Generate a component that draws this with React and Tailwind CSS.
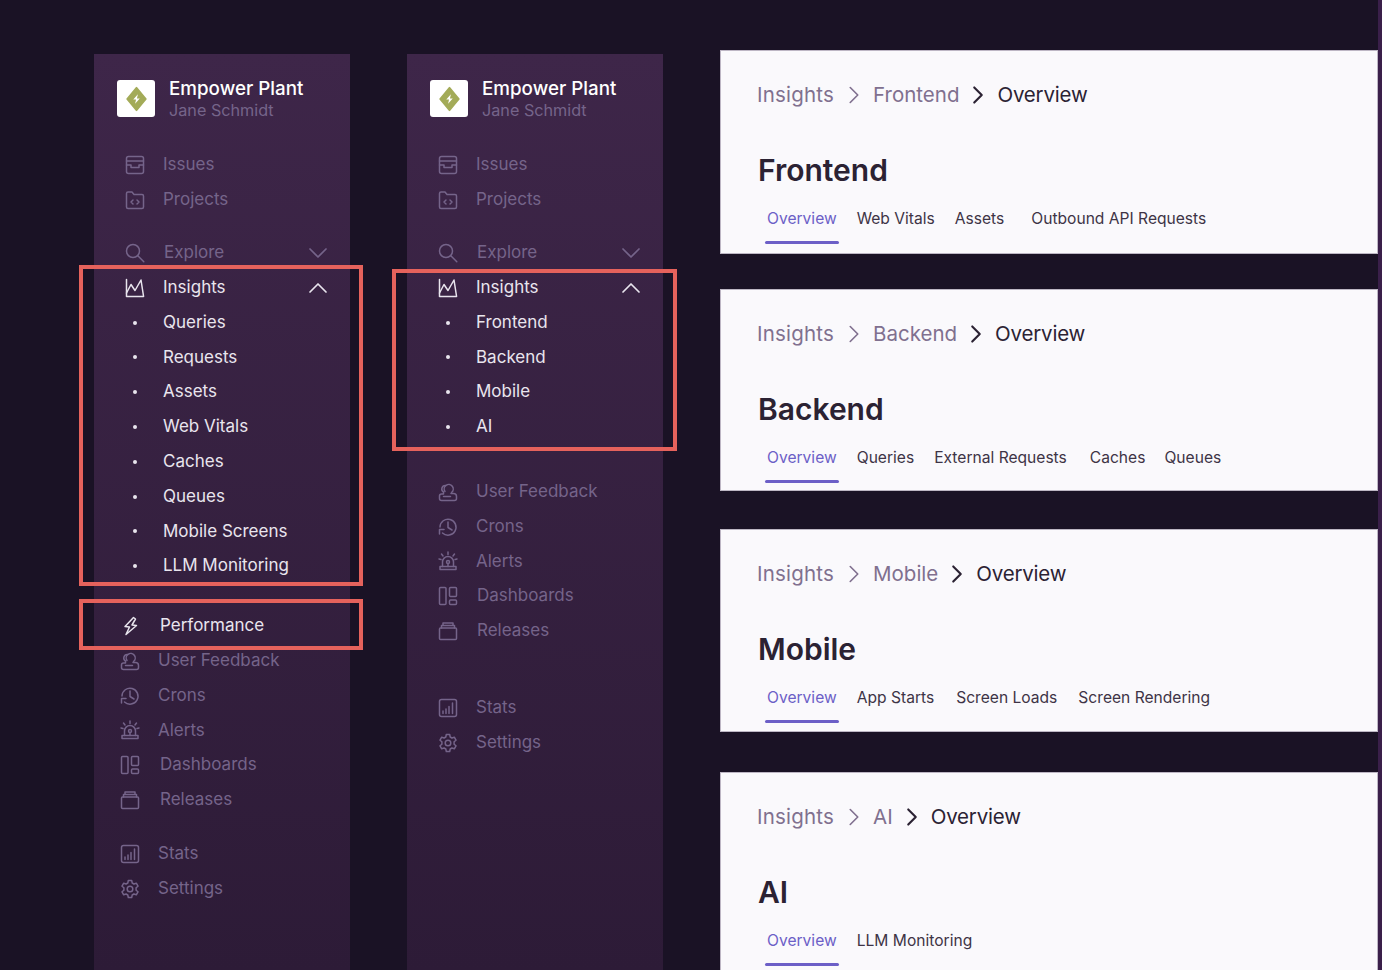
import { ChevronDown, ChevronRight, ChevronUp } from "lucide-react";

const Svg = ({ children, className = "" }) => (
  <svg viewBox="0 0 20 20" fill="none" stroke="currentColor" strokeWidth="1.5" strokeLinecap="round" strokeLinejoin="round" className={`w-5 h-5 shrink-0 ${className}`}>
    {children}
  </svg>
);

const IssuesIcon = () => (
  <Svg>
    <rect x="1.5" y="1.5" width="17" height="17" rx="2" />
    <path d="M1.5 6h17M1.5 10h4.5v2.5h8V10h4.5" />
  </Svg>
);
const ProjectsIcon = () => (
  <Svg>
    <path d="M1.5 3.5a1.500 1.500 0 0 1 1.500-1.500h4l2 2.500h8a1.500 1.500 0 0 1 1.500 1.500v11a1.500 1.500 0 0 1-1.500 1.500H3A1.500 1.500 0 0 1 1.500 17z" />
    <path d="M8 10l-2 2 2 2M12 10l2 2-2 2" />
  </Svg>
);
const SearchIcon = () => (
  <Svg>
    <circle cx="8" cy="8" r="6.500" />
    <path d="M12.800 12.800l6 6" />
  </Svg>
);
const InsightsIcon = () => (
  <Svg>
    <path d="M1.500 1.500v17h17" />
    <path d="M1.500 15l4.500-8.500 4 6 6-10.500 2.500 16" />
  </Svg>
);
const BoltIcon = () => (
  <Svg>
    <path d="M12.500 1.500L4 10.500l4.500.5-3.500 7.500L15.500 9.500 11 9l3.500-6z" />
  </Svg>
);
const FeedbackIcon = () => (
  <Svg>
    <path d="M7 9.500a4.500 4.500 0 1 1 6.500 1" />
    <path d="M7.500 3.500a3.500 3.500 0 0 0-2 6.500v2H3.500a2 2 0 0 0-2 2v2.500a2 2 0 0 0 2 2h13a2 2 0 0 0 2-2v-2a3 3 0 0 0-3-3h-2.500" />
    <path d="M5.500 14.500h7" />
  </Svg>
);
const CronsIcon = () => (
  <Svg>
    <path d="M2 10a8 8 0 1 1 2.500 6" />
    <path d="M10 5v5.500l4 2.500M1.500 12.500h4.500M1.500 12.500v4.500" />
  </Svg>
);
const AlertsIcon = () => (
  <Svg>
    <path d="M4.500 15.500V11a5.500 5.500 0 0 1 11 0v4.500" />
    <path d="M2 15.500h16v3H2z" />
    <circle cx="10" cy="11" r="1.500" />
    <path d="M10 12.500v3M10 1v2.500M3.500 3l1.500 2M16.500 3L15 5M1 8l2 .5M19 8l-2 .5" />
  </Svg>
);
const DashboardsIcon = () => (
  <Svg>
    <rect x="1.500" y="1.500" width="6.500" height="17" rx="1" />
    <rect x="11.500" y="1.500" width="7" height="9" rx="1" />
    <rect x="11.500" y="14" width="7" height="4.500" rx="1" />
  </Svg>
);
const ReleasesIcon = () => (
  <Svg>
    <rect x="1.500" y="7" width="17" height="11.500" rx="1" />
    <path d="M3.500 7V4.500h13V7M5 4.500V2h10v2.500" />
  </Svg>
);
const StatsIcon = () => (
  <Svg>
    <rect x="1.500" y="1.500" width="17" height="17" rx="2" />
    <path d="M5 15.500v-2.500M8 15.500v-4.500M11 15.500V8.500M14.500 15.500V5" />
  </Svg>
);
const SettingsIcon = () => (
  <Svg>
    <circle cx="10" cy="10" r="2.800" />
    <path d="M8.300 1.500h3.400l.5 2.500 1.700 1 2.400-.8 1.700 3-1.900 1.600v2.400l1.900 1.600-1.700 3-2.400-.8-1.700 1-.5 2.500H8.300l-.5-2.500-1.700-1-2.400.8-1.700-3L3.900 11.200V8.800L2 7.200l1.700-3 2.400.8 1.700-1z" />
  </Svg>
);

function Row({ icon, label, active, sub, chevron, pad = "pl-[31px]", gap = "ml-[18px]", className = "" }) {
  return (
    <div className={`flex h-[34.8px] items-center pr-[16px] text-[17px] ${pad} ${active ? "text-[#e9e5ee]" : "text-[#75648a]"} ${className}`}>
      <span className="flex w-5 justify-center">
        {sub ? <span className="h-1 w-1 rounded-full bg-[#e9e5ee]" /> : icon}
      </span>
      <span className={gap}>{label}</span>
      {chevron === "down" && <ChevronDown className="ml-auto h-[32px] w-[32px]" strokeWidth={1.3} />}
      {chevron === "up" && <ChevronUp className="ml-auto h-[32px] w-[32px]" strokeWidth={1.3} />}
    </div>
  );
}

function Sidebar({ insights, extraMargin, statsMargin, performance }) {
  const pad = performance ? "pl-[26px]" : "pl-[31px]";
  const wideGap = performance ? "ml-[20px]" : "ml-[19px]";
  return (
    <aside className="w-[256px] h-[916px] mt-[54px] bg-gradient-to-b from-[#3e2649] to-[#2d1b37]">
      <div className="flex h-[93.600px] items-start pl-[23px] pt-[26px]">
        <div className="flex h-[37px] w-[38px] items-center justify-center rounded-[3px] bg-white">
          <svg viewBox="0 0 24 28" className="h-[26px] w-[23px]">
            <path d="M12 2l10 12-10 12L2 14z" fill="#a3ab58" stroke="#a3ab58" strokeWidth="2" strokeLinejoin="round" />
            <path d="M13.500 9l-5 5.500h3L10.500 19l5-5.500h-3z" fill="white" />
          </svg>
        </div>
        <div className="ml-[14px] -mt-[3px]">
          <div className="text-[18.800px] font-medium leading-[24px] text-white">Empower Plant</div>
          <div className="text-[16.200px] leading-[19px] text-[#75648a]">Jane Schmidt</div>
        </div>
      </div>

      <Row icon={<IssuesIcon />} label="Issues" />
      <Row icon={<ProjectsIcon />} label="Projects" />

      <Row icon={<SearchIcon />} label="Explore" chevron="down" className="mt-[18.400px]" gap="ml-[19px]" />
      <Row icon={<InsightsIcon />} label="Insights" chevron="up" active />
      {insights.map((name) => (
        <Row key={name} sub active label={name} />
      ))}

      {performance && <Row icon={<BoltIcon />} label="Performance" active className="mt-[25px]" pad="pl-[27px]" gap="ml-[19px]" />}

      <div className={extraMargin}>
        <Row icon={<FeedbackIcon />} label="User Feedback" pad={pad} />
        <Row icon={<CronsIcon />} label="Crons" pad={pad} />
        <Row icon={<AlertsIcon />} label="Alerts" pad={pad} />
        <Row icon={<DashboardsIcon />} label="Dashboards" pad={pad} gap={wideGap} />
        <Row icon={<ReleasesIcon />} label="Releases" pad={pad} gap={wideGap} />
      </div>

      <div className={statsMargin}>
        <Row icon={<StatsIcon />} label="Stats" pad={pad} />
        <Row icon={<SettingsIcon />} label="Settings" pad={pad} />
      </div>
    </aside>
  );
}

function Panel({ name, tabs, className = "" }) {
  return (
    <section className={`shrink-0 border border-[#bdb6c4] bg-[#faf9fc] pl-[36px] ${className}`}>
      <div className="flex h-[90px] items-center pb-[1px] text-[20.500px] text-[#80708f]">
        <span className="tracking-[0.2px]">Insights</span>
        <ChevronRight className="ml-[5px] mr-[4px] h-[30px] w-[30px]" strokeWidth={1.3} />
        <span>{name}</span>
        <ChevronRight className="mx-[4px] h-[30px] w-[30px] text-[#2b2233]" strokeWidth={1.7} />
        <span className="tracking-[-0.2px] text-[#2b2233]">Overview</span>
      </div>
      <h2 className="-mt-[1px] pl-[1px] text-[30px] font-semibold leading-[60px] text-[#2b2233]">{name}</h2>
      <div className="mt-[7px] flex pl-[10px] text-[15.600px] text-[#3e3446]">
        <div className="relative mr-[20px] pb-[14px] text-[#6c5fc7]">
          Overview
          <span className="absolute -left-[2px] -right-[2px] bottom-0 h-[3px] rounded-sm bg-[#6c5fc7]" />
        </div>
        {tabs.map((t) => (
          <div key={t.label} className={t.className}>{t.label}</div>
        ))}
      </div>
    </section>
  );
}

export default function App() {
  return (
    <div className="relative flex h-[970px] overflow-hidden bg-[#1a1225] font-['Inter',sans-serif]">
      <div className="ml-[94px] flex gap-[57px]">
        <Sidebar
          performance
          extraMargin=""
          statsMargin="mt-[19px]"
          insights={["Queries", "Requests", "Assets", "Web Vitals", "Caches", "Queues", "Mobile Screens", "LLM Monitoring"]}
        />
        <Sidebar
          extraMargin="mt-[30px]"
          statsMargin="mt-[42px]"
          insights={["Frontend", "Backend", "Mobile", "AI"]}
        />
      </div>

      <main className="ml-[57px] mt-[49.500px] flex w-[658px] flex-col">
        <Panel name="Frontend" className="h-[204px]" tabs={[{ label: "Web Vitals", className: "mr-[20px]" }, { label: "Assets", className: "mr-[27px]" }, { label: "Outbound API Requests" }]} />
        <Panel name="Backend" className="mt-[35px] h-[202px]" tabs={[{ label: "Queries", className: "mr-[20px]" }, { label: "External Requests", className: "mr-[23px]" }, { label: "Caches", className: "mr-[19px]" }, { label: "Queues" }]} />
        <Panel name="Mobile" className="mt-[38px] h-[203px]" tabs={[{ label: "App Starts", className: "mr-[22px]" }, { label: "Screen Loads", className: "mr-[21px]" }, { label: "Screen Rendering" }]} />
        <Panel name="AI" className="mt-[40px] h-[211px] border-b-0" tabs={[{ label: "LLM Monitoring" }]} />
      </main>

      <div className="ml-auto w-1 bg-[#3a1f4a]" />

      <div className="pointer-events-none absolute left-[79px] top-[265px] h-[321px] w-[284px] border-4 border-[#e5625c]" />
      <div className="pointer-events-none absolute left-[79px] top-[599px] h-[51px] w-[284px] border-4 border-[#e5625c]" />
      <div className="pointer-events-none absolute left-[392px] top-[269px] h-[182px] w-[285px] border-4 border-[#e5625c]" />
    </div>
  );
}
